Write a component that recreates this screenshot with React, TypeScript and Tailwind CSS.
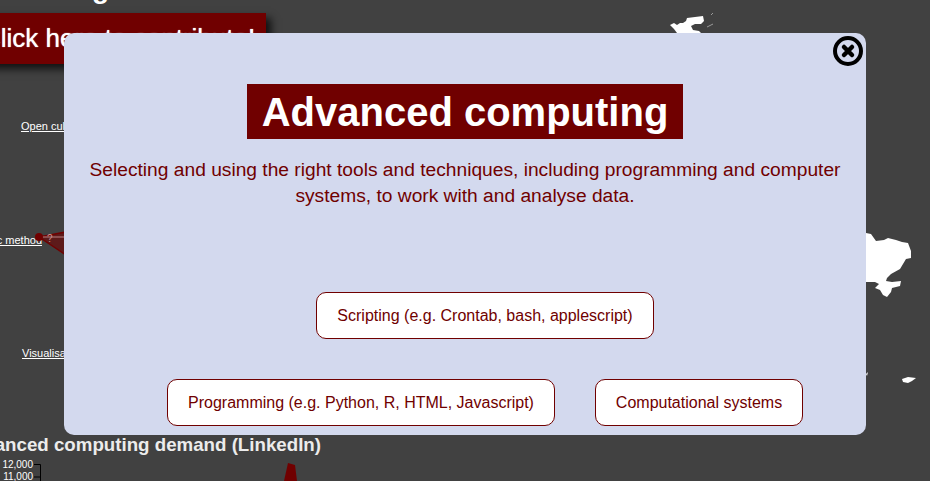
import React from 'react';

const font = "font-['Liberation_Sans',Arial,sans-serif]";

function Background() {
  return (
    <>
      {/* heading cut off by the top of the window */}
      <div className="absolute left-[-150px] top-[-27px] text-[28px] leading-[32px] font-bold text-white whitespace-nowrap w-[400px] text-center">
        Learning
      </div>

      <div className="absolute left-[-30px] top-[13px] w-[296px] h-[51px] bg-[#700000] shadow-[5px_5px_8px_rgba(0,0,0,0.75)] flex items-center pl-[12px] text-[26px] text-white whitespace-nowrap [text-shadow:0_0_1px_#fff]">
        Click here to contribute!
      </div>

      <a className="absolute left-[21px] top-[119px] text-[11px] leading-[14px] text-white underline whitespace-nowrap">Open culture</a>
      <a className="absolute right-[888px] top-[233px] text-[11px] leading-[14px] text-white underline whitespace-nowrap">Scientific method</a>
      <a className="absolute left-[22px] top-[346px] text-[11px] leading-[14px] text-white underline whitespace-nowrap">Visualisation</a>

      {/* radar chart tip poking out from under the dialog */}
      <svg className="absolute left-0 top-[220px]" width="70" height="40" viewBox="0 0 70 40">
        <path d="M39 17 L66 12 L66 35 Z" fill="#700000" fillOpacity="0.6" stroke="#700000" strokeWidth="1.5" />
        <line x1="39" y1="17" x2="66" y2="17" stroke="#b98080" strokeWidth="1" />
        <circle cx="39" cy="17" r="4" fill="#700000" />
        <text x="47" y="22" fontSize="10" fill="#c89090">?</text>
      </svg>

      <div className="absolute right-[609px] top-[434px] text-[18.72px] leading-[22px] font-bold text-[#ececec] whitespace-nowrap">
        Advanced computing demand (LinkedIn)
      </div>

      <div className="absolute left-[2px] top-[459px] w-[31px] text-right text-[10px] leading-[12px] font-medium text-white">
        <div>12,000</div>
        <div>11,000</div>
      </div>
      <svg className="absolute left-[34px] top-[460px]" width="10" height="21" viewBox="0 0 10 21">
        <path d="M0 4.5 H6.5 V21 M0 17 H6.5" fill="none" stroke="#000" strokeWidth="1" />
      </svg>
      <svg className="absolute left-[282px] top-[462px]" width="16" height="19" viewBox="0 0 16 19">
        <path d="M2 19 L6 1 L13 3 L15 19 Z" fill="#700000" />
      </svg>

      {/* map fragments */}
      <svg className="absolute left-[660px] top-[8px]" width="60" height="26" viewBox="0 0 60 26">
        <path d="M10 17 L14 15 L17 17 L20 15 L23 15 L26 13 L27 10 L35 9 L43 8 L44 13 L41 16 L35 16 L31 18 L33 22 L39 23 L41 25 L17 25 L14 21 Z" fill="#fff" />
        <path d="M51 7 L53 5 M47 19 L53 16" stroke="#9a9a9a" strokeWidth="1" />
      </svg>
      <svg className="absolute left-[866px] top-[232px]" width="64" height="160" viewBox="0 0 64 160">
        <path d="M0 1 L5 2 L10 9 L18 8 L22 6 L30 8 L36 10 L42 11 L45 19 L45 26 L40 27 L37 32 L34 37 L25 42 L21 46 L20 49 L26 50 L35 49 L34 54 L26 56 L25 60 L21 65 L17 63 L14 58 L9 56 L13 52 L9 50 L0 50 Z" fill="#fff" />
        <path d="M36 147 L42 145 L50 146 L46 149 L42 151 L37 150 Z" fill="#fff" />
        <path d="M0 142 L2 140 L1 144 Z" fill="#fff" />
      </svg>
    </>
  );
}

function TopicButton({ label, className }: { label: string; className: string }) {
  return (
    <button className={`h-[47px] bg-white border border-[#700000] rounded-[10px] text-[16px] text-[#700000] whitespace-nowrap ${className}`}>
      {label}
    </button>
  );
}

export default function App() {
  return (
    <div className={`relative w-[930px] h-[481px] overflow-hidden bg-[#414141] ${font}`}>
      <Background />

      {/* dialog */}
      <div className="absolute left-[64px] top-[33px] w-[802px] h-[402px] bg-[#d3d9ee] rounded-[10px] flex flex-col items-center pt-[51px]">
        <button className="absolute right-[3px] top-[3px] text-black">
          <svg width="30" height="30" viewBox="0 0 30 30">
            <circle cx="15" cy="15" r="13" fill="none" stroke="currentColor" strokeWidth="4" />
            <path d="M11 11 L19 19 M19 11 L11 19" stroke="currentColor" strokeWidth="4.5" strokeLinecap="round" />
          </svg>
        </button>

        <h1 className="w-[436px] h-[55px] bg-[#700000] text-white text-[40px] font-bold flex items-center justify-center whitespace-nowrap">
          Advanced computing
        </h1>

        <p className="mt-[18px] w-[770px] text-center text-[19.2px] leading-[26px] text-[#700000]">
          Selecting and using the right tools and techniques, including programming and computer systems, to work with and analyse data.
        </p>

        <div className="mt-[83px] pl-[40px] flex flex-col items-center gap-[40px]">
          <TopicButton label="Scripting (e.g. Crontab, bash, applescript)" className="w-[338px]" />

          <div className="flex gap-[40px]">
            <TopicButton label="Programming (e.g. Python, R, HTML, Javascript)" className="w-[388px]" />
            <TopicButton label="Computational systems" className="w-[208px]" />
          </div>
        </div>
      </div>
    </div>
  );
}
